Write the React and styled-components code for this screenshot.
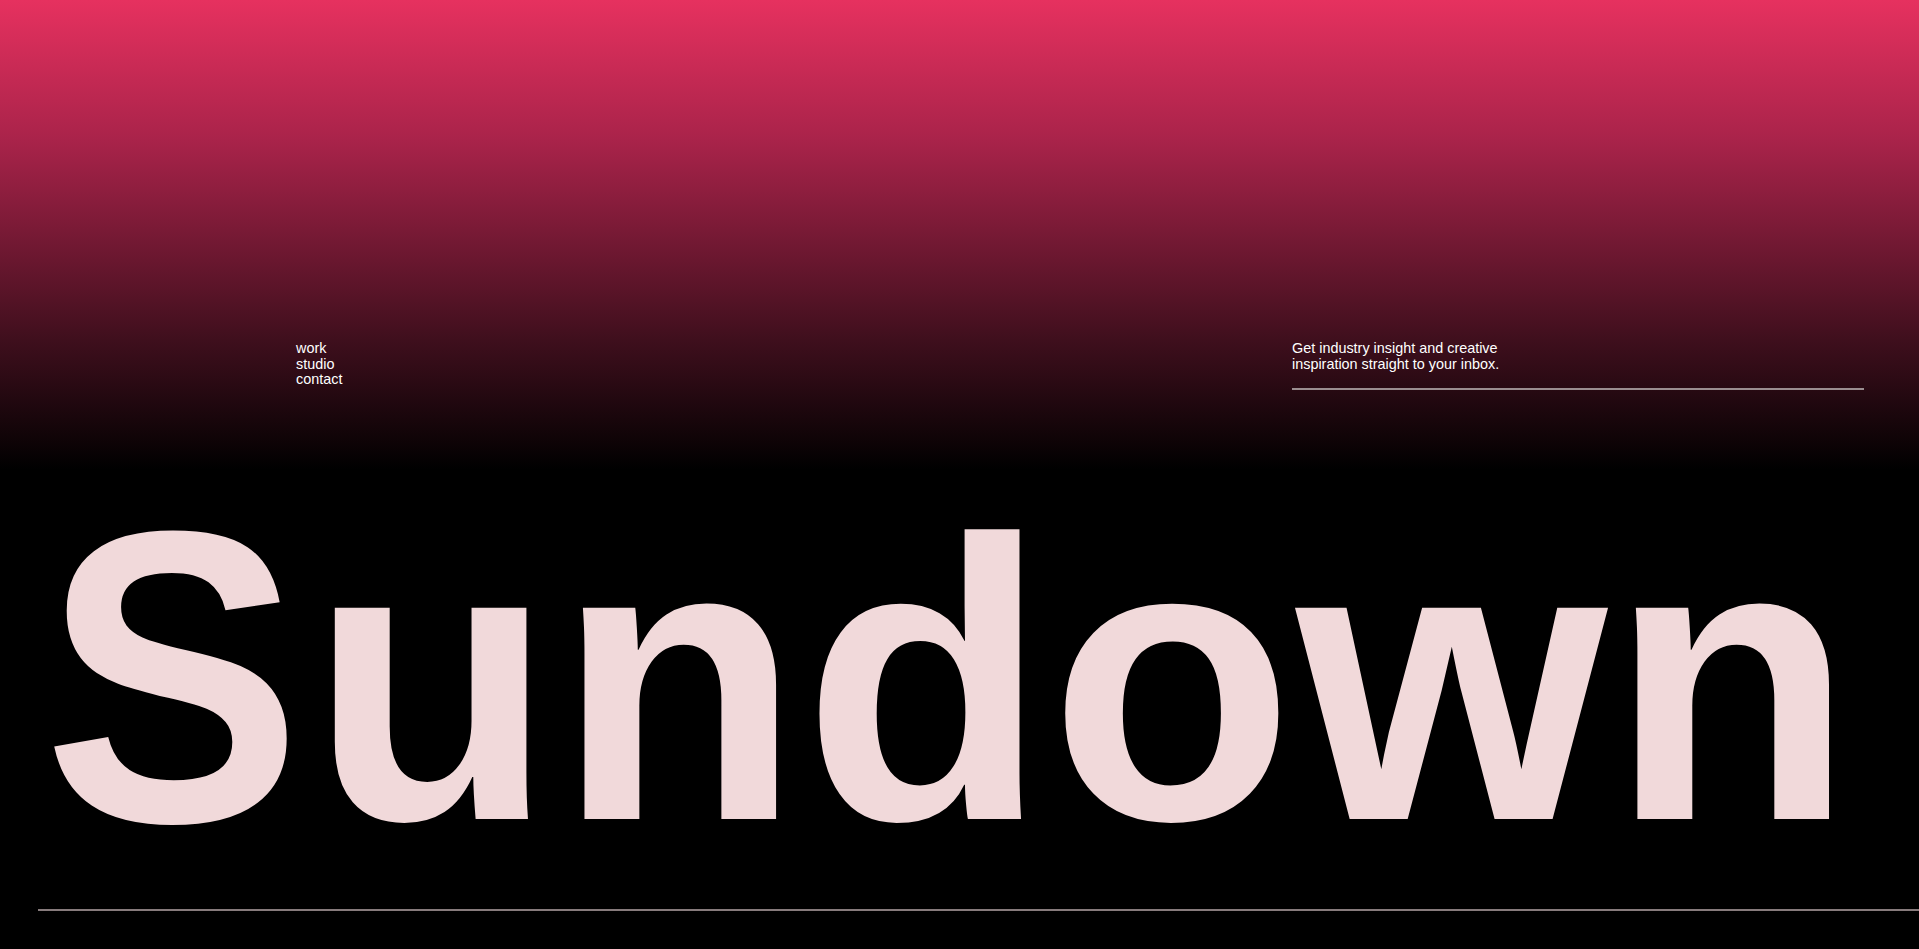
import React from 'react';
import styled, { createGlobalStyle } from 'styled-components';

const GlobalStyle = createGlobalStyle`
  html, body {
    margin: 0;
    padding: 0;
    background: #000;
  }
  body {
    font-family: "Liberation Sans", Arial, sans-serif;
    overflow: hidden;
  }
`;

let Page = styled.div`
  min-height: 949px;
  background: linear-gradient(180deg, #e6315f 0px, #a9234a 140px, #3f0f1d 340px, #000 470px);
  color: #fff;
`;

let Top = styled.header`
  display: flex;
  align-items: flex-start;
  padding: 341px 55px 0 296px;
`;

let Nav = styled.nav`
  display: flex;
  flex-direction: column;
  flex: 1;
`;

let NavLink = styled.a`
  font-size: 14.4px;
  line-height: 15.6px;
  color: #fff;
  text-decoration: none;
`;

let Newsletter = styled.div`
  width: 572px;
`;

let Blurb = styled.p`
  margin: 0;
  font-size: 14.4px;
  line-height: 15.6px;
  color: #fff;
`;

let Rule = styled.div`
  height: 2px;
  margin-top: ${props => props.gap}px;
  margin-left: ${props => props.indent || 0}px;
  background: ${props => props.color};
`;

let Title = styled.h1`
  margin: 91px 0 0;
  padding-left: 39px;
  font-family: "Liberation Sans", Arial, sans-serif;
  font-weight: 700;
  font-size: 400px;
  line-height: 400px;
  letter-spacing: 2.2px;
  color: #f1d9da;
  white-space: nowrap;
`;

// the S sits a little taller and narrower than the rest
let Cap = styled.span`
  display: inline-block;
  margin-right: 2px;
  transform: scale(0.97, 1.04);
  transform-origin: 50% 72%;
`;

function App() {
  return (
    <>
      <GlobalStyle />
      <Page>
        <Top>
          <Nav>
            <NavLink href="#">work</NavLink>
            <NavLink href="#">studio</NavLink>
            <NavLink href="#">contact</NavLink>
          </Nav>
          <Newsletter>
            <Blurb>
              Get industry insight and creative
              <br />
              inspiration straight to your inbox.
            </Blurb>
            <Rule gap={16} color="#9a8e90" />
          </Newsletter>
        </Top>
        <Title>
          <Cap>S</Cap>undown
        </Title>
        <Rule gap={28} indent={38} color="#877b7c" />
      </Page>
    </>
  );
}

export default App;
